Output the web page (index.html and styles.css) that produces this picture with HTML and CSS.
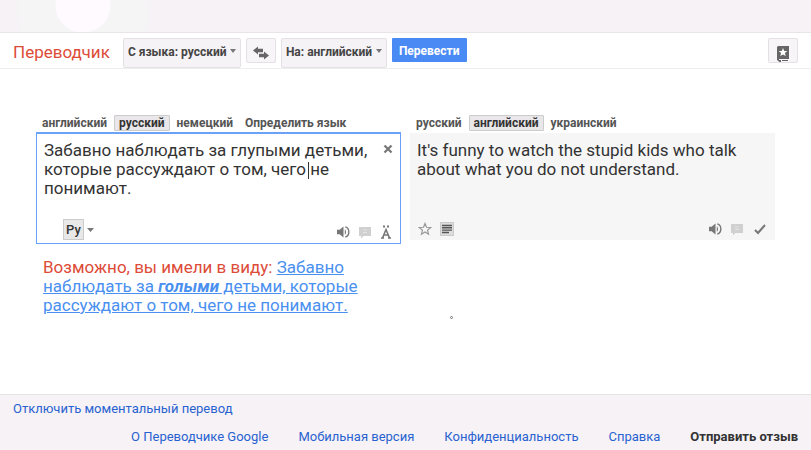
FILE: index.html
```html
<!DOCTYPE html>
<html lang="ru">
<head>
  <meta charset="UTF-8" />
  <meta name="viewport" content="width=device-width, initial-scale=1.0" />
  <title>Переводчик Google</title>
  <link rel="stylesheet" href="styles.css">
</head>
<body>
  <!-- Shared icons -->
  <svg class="sprite" aria-hidden="true">
    <symbol id="icon-speaker" viewBox="0 0 14 14">
      <path d="M1 4.800h2.600L7.500 1.600v10.800L3.600 9.200H1z"/>
      <path d="M8.800 4.200c1.600 1 1.600 4.600 0 5.600z"/>
      <path d="M9.300 1.900c4.700 1.400 4.700 8.800 0 10.200" fill="none" stroke="currentColor" stroke-width="1.400"/>
    </symbol>
    <symbol id="icon-comment" viewBox="0 0 14 14">
      <path d="M1 2h12v9H5.500L3 13.500V11H1z"/>
      <path d="M5 5h4M5 7.500h4" stroke="#fff" stroke-opacity=".4" fill="none"/>
    </symbol>
  </svg>

  <div class="top-bar"><div class="halo"></div></div>

  <header class="toolbar">
    <h1>Переводчик</h1>
    <div class="select-box">
      <select class="from" aria-label="Язык оригинала">
        <option>С языка: русский</option>
      </select>
    </div>
    <button class="tool swap" type="button" aria-label="Поменять языки">
      <svg width="16" height="14" viewBox="0 0 16 14"><path d="M0 4.500L5 .5v2.300h5v3.400H5v2.300zM16 9.500l-5-4v2.300H6v3.400h5v2.300z"/></svg>
    </button>
    <div class="select-box">
      <select class="to" aria-label="Язык перевода">
        <option>На: английский</option>
      </select>
    </div>
    <button class="translate" type="button">Перевести</button>
    <button class="tool phrasebook" type="button" aria-label="Разговорник">
      <svg width="12" height="16" viewBox="0 0 12 16">
        <path d="M1 0h11v13H2v1h2v2H2.500L0 14V1z"/>
        <path d="M5 14.500h6" stroke="currentColor"/>
        <path d="M6 2l1.200 2.900 3.100.2-2.400 2 .8 3L6 8.400l-2.700 1.700.8-3-2.400-2 3.100-.2z" fill="#fff"/>
      </svg>
    </button>
  </header>

  <main>
    <section class="column">
      <div class="tabs">
        <button type="button">английский</button>
        <button type="button" class="active">русский</button>
        <button type="button">немецкий</button>
        <button type="button" class="detect">Определить язык</button>
      </div>
      <div class="panel source">
        <div class="field">
          <textarea id="source-text" rows="3" spellcheck="false" aria-label="Исходный текст">Забавно наблюдать за глупыми детьми, которые рассуждают о том, чего не понимают.</textarea>
          <span class="caret"></span>
          <button class="icon clear" type="button" aria-label="Очистить">
            <svg width="10" height="10" viewBox="0 0 10 10"><path d="M1.500 1.500l7 7M8.500 1.500l-7 7" stroke="currentColor" stroke-width="2.200"/></svg>
          </button>
        </div>
        <div class="actions">
          <button class="keyboard" type="button">Ру</button>
          <button class="icon more" type="button" aria-label="Способ ввода">
            <svg width="7" height="4" viewBox="0 0 7 4"><path d="M0 0h7L3.500 4z"/></svg>
          </button>
          <button class="icon push" type="button" aria-label="Прослушать"><svg width="14" height="14"><use href="#icon-speaker"/></svg></button>
          <button class="icon pale" type="button" aria-label="Комментарий"><svg width="14" height="14"><use href="#icon-comment"/></svg></button>
          <button class="icon" type="button" aria-label="Транслитерация">
            <svg width="12" height="14" viewBox="0 0 12 14">
              <path d="M3 1.500h2M7 1.500h2" stroke="currentColor" stroke-width="2"/>
              <path d="M2.500 13L6 4.500 9.500 13M3.500 10h5M1 13h3M8 13h3" fill="none" stroke="currentColor" stroke-width="1.600"/>
            </svg>
          </button>
        </div>
      </div>
      <p class="suggestion">Возможно, вы имели в виду: <a href="#">Забавно наблюдать за <b>голыми</b> детьми, которые рассуждают о том, чего не понимают.</a></p>
    </section>

    <section class="column">
      <div class="tabs">
        <button type="button">русский</button>
        <button type="button" class="active">английский</button>
        <button type="button">украинский</button>
      </div>
      <div class="panel result">
        <p class="translation" lang="en">It's funny to watch the stupid kids who talk about what you do not understand.</p>
        <div class="actions">
          <button class="icon star" type="button" aria-label="В избранное">
            <svg width="14" height="14" viewBox="0 0 14 14"><path d="M7 1.500l1.500 3.800 4.200.3-3.200 2.600 1 4L7 10l-3.500 2.200 1-4L1.300 5.600l4.200-.3z" fill="none" stroke="currentColor" stroke-width="1.200"/></svg>
          </button>
          <button class="icon" type="button" aria-label="Выделить всё">
            <svg width="14" height="14" viewBox="0 0 14 14">
              <path d="M.5 .5h13v13H.5z" fill="#ddd" stroke="#aaa" stroke-dasharray="1 1"/>
              <path d="M2 3.500h10M2 5.800h10M2 8.100h10M2 10.500h7" stroke="#555" stroke-width="1.400"/>
            </svg>
          </button>
          <button class="icon push" type="button" aria-label="Прослушать"><svg width="14" height="14"><use href="#icon-speaker"/></svg></button>
          <button class="icon pale" type="button" aria-label="Комментарий"><svg width="14" height="14"><use href="#icon-comment"/></svg></button>
          <button class="icon" type="button" aria-label="Подтвердить">
            <svg width="12" height="14" viewBox="0 0 12 14"><path d="M1 8l3 3 7-8" fill="none" stroke="currentColor" stroke-width="2"/></svg>
          </button>
        </div>
      </div>
      <div class="pointer"></div>
    </section>
  </main>

  <footer>
    <a href="#">Отключить моментальный перевод</a>
    <nav>
      <a href="#">О Переводчике Google</a>
      <a href="#">Мобильная версия</a>
      <a href="#">Конфиденциальность</a>
      <a href="#">Справка</a>
      <a href="#" class="feedback">Отправить отзыв</a>
    </nav>
  </footer>
</body>
</html>
```

FILE: styles.css
```css
* {
  margin: 0;
  padding: 0;
  box-sizing: border-box;
}
body {
  min-height: 100vh;
  display: flex;
  flex-direction: column;
  font-family: Roboto, sans-serif;
  font-size: 17px;
  line-height: 19px;
  color: #333;
  background: #fff;
}
button, select, textarea {
  font: inherit;
  color: inherit;
  border: none;
  background: none;
}
button { cursor: pointer; }
svg {
  display: block;
  fill: currentColor;
}
.sprite {
  position: absolute;
  width: 0;
  height: 0;
}

/* Top bar */
.top-bar {
  height: 33px;
  background: #f6f2f6;
  border-bottom: 1px solid #e8e4e8;
  overflow: hidden;
}
.halo {
  height: 100%;
  background: radial-gradient(circle at 83px 5px, #fefaff 27px, #f5f5f5 28px, #f5f5f5 64px, transparent 70px);
}

/* Toolbar */
.toolbar {
  height: 36px;
  display: flex;
  align-items: flex-start;
  gap: 5px;
  padding: 5px 13px 0;
  border-bottom: 1px solid #eee;
}
h1 {
  margin-right: 8px;
  font-size: 17px;
  font-weight: 400;
  line-height: 29px;
  color: #dd4b39;
}
.select-box { position: relative; }
.select-box::after {
  content: "";
  position: absolute;
  top: 11px;
  right: 5px;
  border: 3px solid transparent;
  border-top: 4px solid #777;
  border-bottom: none;
  pointer-events: none;
}
select {
  appearance: none;
  display: block;
  height: 30px;
  padding: 0 13px 2px 4px;
  border: 1px solid #e4e1e4;
  border-radius: 2px;
  background: #f6f3f6;
  font-size: 12px;
  font-weight: 700;
  color: #444;
}
.tool {
  height: 25px;
  width: 30px;
  display: flex;
  align-items: center;
  justify-content: center;
  border: 1px solid #e4e1e4;
  border-radius: 2px;
  background: #f8f5f8;
  color: #666;
}
.swap { padding-top: 5px; }
.phrasebook {
  margin-left: auto;
  padding-top: 7px;
}
.translate {
  height: 24px;
  padding: 2px 7px 0;
  border-radius: 1px;
  background: #4a8af5;
  font-size: 12px;
  font-weight: 700;
  color: #fff;
}

/* Translation area */
main {
  flex: 1;
  display: grid;
  grid-template-columns: 1fr 1fr;
  gap: 9px;
  padding: 46px 36px 24px;
}
.tabs {
  display: flex;
  gap: 2px;
  height: 17px;
  padding-left: 1px;
}
.tabs button {
  height: 16px;
  padding: 0 4px;
  border: 1px solid transparent;
  font-size: 12px;
  font-weight: 700;
  line-height: 15px;
  color: #555;
}
.tabs .active {
  border-color: #ccc;
  border-radius: 1px;
  background: #e9e7e9;
  color: #333;
}
.panel {
  display: flex;
  flex-direction: column;
  justify-content: space-between;
}
.source {
  min-height: 112px;
  border: 1px solid #6ba2f7;
  border-top-width: 2px;
  padding: 7px 7px 3px;
}
.field {
  position: relative;
  display: flex;
  align-items: flex-start;
}
textarea {
  flex: 1;
  min-width: 0;
  resize: none;
  outline: none;
  overflow: hidden;
}
.caret {
  position: absolute;
  top: 21px;
  left: 264px;
  width: 1px;
  height: 17px;
  background: #333;
}
.clear { padding: 3px 0; }
.result {
  min-height: 107px;
  margin-top: 1px;
  padding: 8px 7px 4px;
  background: #f6f6f6;
}
.translation { padding-right: 20px; }
.actions {
  display: flex;
  align-items: center;
  gap: 8px;
}
.source .actions { padding: 0 1px 0 19px; }
.icon { color: #777; }
.pale { color: #d0d0d0; }
.star {
  margin-left: 1px;
  color: #999;
}
.push { margin-left: auto; }
.source .push, .source .push ~ .icon { padding-top: 5px; }
.result .actions .icon:last-child { margin: 0 2px; }
.keyboard {
  width: 21px;
  height: 21px;
  border: 1px solid #ccc;
  background: #e9e8e9;
  font-size: 13px;
  font-weight: 500;
}
.more { margin-left: -5px; }
.suggestion {
  padding: 14px 30px 0 7px;
  color: #dd4b39;
}
.suggestion a { color: #4a90f0; }
.suggestion b { font-style: italic; }
.pointer {
  width: 3px;
  height: 3px;
  margin: 76px 0 0 40px;
  border: 1px solid #777;
  border-radius: 50%;
}

/* Footer */
footer {
  padding: 4px 13px;
  border-top: 1px solid #e4e4e4;
  background: #f6f2f6;
  font-size: 13px;
}
footer a {
  color: #2962d0;
  text-decoration: none;
}
nav {
  display: flex;
  flex-wrap: wrap;
  justify-content: flex-end;
  gap: 8px 30px;
  margin-top: 9px;
}
.feedback {
  font-weight: 700;
  color: #333;
}
@media (max-width: 600px) {
  .toolbar {
    height: auto;
    flex-wrap: wrap;
    padding-bottom: 5px;
  }
  main {
    grid-template-columns: 1fr;
    padding: 20px 12px;
  }
}
```
